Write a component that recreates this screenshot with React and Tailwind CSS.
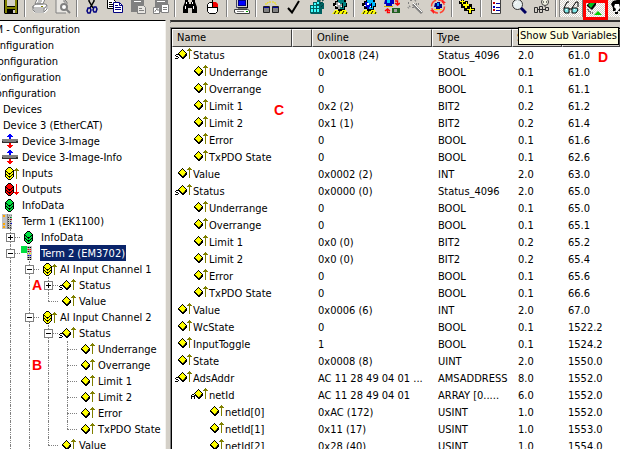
// Palette for the small bitmap icons
const COLORS = {
	k: "#000000",
	y: "#ffff00",
	o: "#808000",
	r: "#ff0000",
	g: "#00e040",
	b: "#0000ff",
	s: "#808080",
	l: "#c0c0c0",
	w: "#ffffff",
	t: "#008080",
	c: "#00ffff",
	n: "#000080",
	a: "#ffa500",
	d: "#303030",
};

// Draws a bitmap icon, one character per pixel
function Bitmap({ rows, swap = {} }) {
	const paths = {};
	rows.forEach((row, y) => {
		[...row].forEach((ch, x) => {
			if (ch === ".") return;
			const key = swap[ch] || ch;
			paths[key] = (paths[key] || "") + `M${x} ${y}h1v1h-1z`;
		});
	});
	return (
		<svg
			width={rows[0].length}
			height={rows.length}
			shapeRendering="crispEdges"
			className="shrink-0"
			aria-hidden="true"
		>
			{Object.entries(paths).map(([key, d]) => (
				<path key={key} d={d} fill={COLORS[key]} />
			))}
		</svg>
	);
}

const VARIABLE = [
	"..............o..",
	".......k.....ooo.",
	"......kyk...ooooo",
	".....kyyyk....o..",
	"....kyyyyyk...o..",
	"...kyyyyyyyk..o..",
	"...kkyyyyykk..o..",
	"....kkyyyokk..o..",
	".....kkyokk...o..",
	"......kkkk....o..",
	".......kk.....o..",
	".................",
];

const STRUCT = [
	"..............o..",
	".......k.....ooo.",
	"......kyk...ooooo",
	".....kyyyk....o..",
	"....kyyyyyk...o..",
	"...kyyyyyyyk..o..",
	".kkkkyyyyykk..o..",
	"k...kkyyyokk..o..",
	".kk..kkyokk...o..",
	"...k..kkkk....o..",
	"kkk....kk.....o..",
	".................",
];

const ARRAY = [
	"..............o..",
	".......k.....ooo.",
	"......kyk...ooooo",
	".....kyyyk....o..",
	"....kyyyyyk...o..",
	"...kyyyyyyyk..o..",
	".kk.kyyyyykk..o..",
	"k..kkkyyyokk..o..",
	"kkkk.kkyokk...o..",
	"k..k..kkkk....o..",
	"k..k...kk.....o..",
	".................",
];

const STACK = [
	"......kkk...",
	".....kyyyk..",
	"....kyyyyyk.",
	"...kyyyyyyyk",
	"...kkyyyyykk",
	"...kykyyykyk",
	"...kyykkkyyk",
	"...kkyykyykk",
	"...kykyyykyk",
	"...kyykkkyyk",
	"....kyykyyk.",
	".....kyyyk..",
	"......kkk...",
];

const UP_ARROW = ["..o..", ".ooo.", "ooooo", "..o..", "..o..", "..o..", "..o..", "..o..", "..o..", "..o..", "..o.."];
const DOWN_ARROW = [...UP_ARROW].reverse();

const IMAGE = [
	".......bb.......",
	"......bbbb......",
	".....bbbbbb.....",
	".......bb.......",
	".......bb.......",
	"ssssssssssssssss",
	"ssssssssssssssss",
	"dsssssssssssssdd",
	"dddddddddddddddd",
	".......rr.......",
	".......rr.......",
	".....rrrrrr.....",
	"......rrrr......",
	".......rr.......",
];

const COUPLER = [
	"lllllsllll",
	"laallslsls",
	"laallsllll",
	"lllllsdldg",
	"lllllsllll",
	"lllllsdldr",
	"lllllsllll",
	"lllllsdldl",
	"lllllsllll",
	"laallsdldb",
	"laallsllll",
	"lllllsdldl",
	"laallsllll",
	"laallsdldl",
	"lllllsssss",
];

const TERMINAL = [
	"gggggglllll",
	"ggggggskgkl",
	"gggggglllll",
	"ggggggsrsrl",
	"gggggglllll",
	"ggggggsksrl",
	"gggggglllll",
	"......sysyl",
	"......lllll",
	"......sbsbl",
	"......lllll",
	"......skskl",
	"......lllll",
	"......skskl",
];

function TreeIcon({ kind }) {
	if (kind === "inputs" || kind === "outputs") {
		const out = kind === "outputs";
		return (
			<span className="flex items-center">
				<Bitmap rows={STACK} swap={out ? { y: "r" } : {}} />
				<Bitmap rows={out ? DOWN_ARROW : UP_ARROW} swap={out ? { o: "r" } : {}} />
			</span>
		);
	}
	if (kind === "info") return <Bitmap rows={STACK} swap={{ y: "g" }} />;
	if (kind === "image") return <Bitmap rows={IMAGE} />;
	if (kind === "coupler") return <Bitmap rows={COUPLER} />;
	if (kind === "terminal") return <Bitmap rows={TERMINAL} />;
	if (kind === "struct") return <Bitmap rows={STRUCT} />;
	if (kind === "array") return <Bitmap rows={ARRAY} />;
	return <Bitmap rows={VARIABLE} />;
}

// guides: | passes by, t branches, L is the last branch, + and - carry an expander
const TREE = [
	{ label: "Device 3-Image", icon: "image", guides: "" },
	{ label: "Device 3-Image-Info", icon: "image", guides: "" },
	{ label: "Inputs", icon: "inputs", guides: "" },
	{ label: "Outputs", icon: "outputs", guides: "" },
	{ label: "InfoData", icon: "info", guides: "" },
	{ label: "Term 1 (EK1100)", icon: "coupler", guides: "" },
	{ label: "InfoData", icon: "info", guides: "+" },
	{ label: "Term 2 (EM3702)", icon: "terminal", guides: "-", selected: true },
	{ label: "AI Input Channel 1", icon: "inputs", guides: "|-" },
	{ label: "Status", icon: "struct", guides: "||+", mark: "A" },
	{ label: "Value", icon: "variable", guides: "||L" },
	{ label: "AI Input Channel 2", icon: "inputs", guides: "|-" },
	{ label: "Status", icon: "struct", guides: "||-" },
	{ label: "Underrange", icon: "variable", guides: "|||t" },
	{ label: "Overrange", icon: "variable", guides: "|||t", mark: "B" },
	{ label: "Limit 1", icon: "variable", guides: "|||t" },
	{ label: "Limit 2", icon: "variable", guides: "|||t" },
	{ label: "Error", icon: "variable", guides: "|||t" },
	{ label: "TxPDO State", icon: "variable", guides: "|||L" },
	{ label: "Value", icon: "variable", guides: "||L" },
];

function Guide({ type, label }) {
	const branch = type !== "|";
	return (
		<span className="relative flex h-4 w-[19px] shrink-0 justify-end">
			<span className="flex w-2.5 flex-col">
				<span className="h-2 border-l border-dotted border-[#808080]" />
				<span
					className={`h-2 border-dotted border-[#808080] ${type === "L" ? "" : "border-l"} ${branch ? "border-t" : ""}`}
				/>
			</span>
			{(type === "+" || type === "-") && (
				<button
					aria-label={`${type === "+" ? "Expand" : "Collapse"} ${label}`}
					className="absolute top-1 left-[5px] flex size-[9px] items-center justify-center border border-[#808080] bg-white"
				>
					<svg width="5" height="5" shapeRendering="crispEdges" aria-hidden="true">
						<path d={type === "+" ? "M0 2h5v1h-5zM2 0h1v5h-1z" : "M0 2h5v1h-5z"} />
					</svg>
				</button>
			)}
		</span>
	);
}

// Red callout letter
function Mark({ children, className }) {
	return (
		<span
			className={`absolute font-['Liberation_Sans',sans-serif] text-sm leading-4 font-bold text-[#ff0000] ${className}`}
		>
			{children}
		</span>
	);
}

function TreeRow({ row }) {
	return (
		<li className="relative flex h-4 items-center pl-px">
			{[...row.guides].map((g, i) => (
				<Guide key={i} type={g} label={row.label} />
			))}
			<span className="flex w-5 shrink-0 items-center pl-px">
				<TreeIcon kind={row.icon} />
			</span>
			<span className={`h-4 px-px pt-px ${row.selected ? "bg-[#0a246a] text-white" : ""}`}>{row.label}</span>
			{row.mark && <Mark className="top-0 left-8">{row.mark}</Mark>}
		</li>
	);
}

function Tree() {
	return (
		<nav
			aria-label="Configuration"
			className="w-[166px] shrink-0 overflow-hidden border-t border-r border-t-black border-r-[#f4f2ee] bg-white"
		>
			<ul className="leading-4">
				<li className="flex h-4 w-20 justify-end pt-px">M - Configuration</li>
				<li className="flex h-4 w-[54px] justify-end pt-px">Configuration</li>
				<li className="flex h-4 w-[58px] justify-end pt-px">Configuration</li>
				<li className="flex h-4 w-[61px] justify-end pt-px">Configuration</li>
				<li className="flex h-4 w-14 justify-end pt-px">Configuration</li>
				<li className="h-4 pt-px pl-[3px]">Devices</li>
				<li className="h-4 pt-px pl-[3px]">Device 3 (EtherCAT)</li>
				{TREE.map((row, i) => (
					<TreeRow key={i} row={row} />
				))}
			</ul>
		</nav>
	);
}

// name, depth, icon, online, type, size, address
const VARIABLES = [
	["Status", 0, "struct", "0x0018 (24)", "Status_4096", "2.0", "61.0"],
	["Underrange", 1, "variable", "0", "BOOL", "0.1", "61.0"],
	["Overrange", 1, "variable", "0", "BOOL", "0.1", "61.1"],
	["Limit 1", 1, "variable", "0x2 (2)", "BIT2", "0.2", "61.2"],
	["Limit 2", 1, "variable", "0x1 (1)", "BIT2", "0.2", "61.4"],
	["Error", 1, "variable", "0", "BOOL", "0.1", "61.6"],
	["TxPDO State", 1, "variable", "0", "BOOL", "0.1", "62.6"],
	["Value", 0, "variable", "0x0002 (2)", "INT", "2.0", "63.0"],
	["Status", 0, "struct", "0x0000 (0)", "Status_4096", "2.0", "65.0"],
	["Underrange", 1, "variable", "0", "BOOL", "0.1", "65.0"],
	["Overrange", 1, "variable", "0", "BOOL", "0.1", "65.1"],
	["Limit 1", 1, "variable", "0x0 (0)", "BIT2", "0.2", "65.2"],
	["Limit 2", 1, "variable", "0x0 (0)", "BIT2", "0.2", "65.4"],
	["Error", 1, "variable", "0", "BOOL", "0.1", "65.6"],
	["TxPDO State", 1, "variable", "0", "BOOL", "0.1", "66.6"],
	["Value", 0, "variable", "0x0006 (6)", "INT", "2.0", "67.0"],
	["WcState", 0, "variable", "0", "BOOL", "0.1", "1522.2"],
	["InputToggle", 0, "variable", "1", "BOOL", "0.1", "1524.2"],
	["State", 0, "variable", "0x0008 (8)", "UINT", "2.0", "1550.0"],
	["AdsAddr", 0, "struct", "AC 11 28 49 04 01 ...", "AMSADDRESS", "8.0", "1552.0"],
	["netId", 1, "array", "AC 11 28 49 04 01", "ARRAY [0.....", "6.0", "1552.0"],
	["netId[0]", 2, "variable", "0xAC (172)", "USINT", "1.0", "1552.0"],
	["netId[1]", 2, "variable", "0x11 (17)", "USINT", "1.0", "1553.0"],
	["netId[2]", 2, "variable", "0x28 (40)", "USINT", "1.0", "1554.0"],
];

const INDENTS = ["pl-[3px]", "pl-[19px]", "pl-[35px]"];

function VariableTable() {
	return (
		<div className="relative mt-1 min-h-0 flex-1 overflow-hidden border-t border-l border-[#808080]">
			<div className="h-full border-t border-l border-black bg-white">
				<table className="w-full table-fixed border-separate border-spacing-0">
					<colgroup>
						<col className="w-[120px]" />
						<col className="w-5" />
						<col className="w-[120px]" />
						<col className="w-20" />
						<col className="w-[50px]" />
						<col />
					</colgroup>
					<thead>
						<tr className="h-[18px] text-left leading-4">
							{["Name", "", "Online", "Type", "S", ""].map((h, i) => (
								<th
									key={i}
									className="border border-t-white border-r-[#404040] border-b-[#404040] border-l-white bg-[#d4d0c8] p-0 pl-1 font-normal"
								>
									{h}
								</th>
							))}
						</tr>
					</thead>
					<tbody>
						{VARIABLES.map(([name, depth, icon, online, type, size, address], i) => (
							<tr key={i} className="h-[17px] leading-4 whitespace-nowrap">
								<td className={`p-0 ${INDENTS[depth]}`}>
									<span className="flex items-start gap-px">
										<TreeIcon kind={icon} />
										{name}
									</span>
								</td>
								<td className="p-0" />
								<td className="p-0 pl-1.5">{online}</td>
								<td className="p-0 pl-1.5">{type}</td>
								<td className="p-0 pl-1.5">{size}</td>
								<td className="p-0 pl-1.5">{address}</td>
							</tr>
						))}
					</tbody>
				</table>
			</div>
			<Mark className="top-[74px] left-[103px]">C</Mark>
			<Mark className="top-[21px] right-3">D</Mark>
		</div>
	);
}

// Gear on a hatched base, shared by several commands
function Gear({ fill, shade }) {
	return (
		<>
			<path d="M0 16l3-4h11l2 4z" fill="#ffff00" />
			<path d="M2 16l2-3M6 16l2-3M10 16l2-3M14 16l1-2" stroke="#000" strokeWidth="1" />
			<path d="M3 3h2V1h3V0h3v2h3v3h1v4h-2v3h-3v1H6v-2H3V8H1V5h2z" fill="#000" />
			<path d="M4 4h2V2h6v2h2v4h-2v3H7V9H4z" fill={fill} />
			<path d="M4 4h3v2h3v3H8v2H6V9H4z" fill={shade} />
			<path d="M6 5h2v2H6zM3 7h2v1H3zM9 8h2v1H9z" fill="#fff" />
			<path d="M10 5h1v5h-1z" fill="#000" />
		</>
	);
}

const ICONS = {
	save: (
		<>
			<path d="M1 1h14v15H2l-1-1z" fill="#000" />
			<path d="M2 2h2v7h8V2h2v13h-2v-4H4v4H2z" fill="#808000" />
			<path d="M4 2h8v6H4zM10 12h2v3h-2z" fill="#d4d0c8" />
		</>
	),
	print: (
		<>
			<path d="M5 1h8l-2 6H3zM1 8l3-2h9l3 1v5l-3 3H3l-2-2z" fill="#fff" />
			<path
				d="M5 1h8l-2 5H3zM6 3h4M5 5h4M1 8l3-2h9l2 1-2 3H1zM1 8v4l2 2h9l3-3V7M2 12h10M12 10v4"
				fill="none"
				stroke="#808080"
			/>
			<path d="M9 8h2v1H9z" fill="#808000" />
		</>
	),
	preview: (
		<>
			<path d="M1 1h8l3 3v11H1z" fill="#e8e6e2" />
			<path d="M1 1h8l3 3v2M1 1v14h10M9 1v3h3" fill="none" stroke="#808080" />
			<circle cx="9" cy="9" r="3" fill="#fff" stroke="#808080" strokeWidth="2" />
			<path d="M11 11l4 4" stroke="#808080" strokeWidth="2" />
		</>
	),
	cut: (
		<>
			<path d="M5 0v3l4 7M10 0v3L6 10" fill="none" stroke="#000" strokeWidth="1.5" />
			<path d="M4 10h2l1 2-1 3H4l-1-2zM10 9h2l1 2-1 3h-2l-1-2z" fill="none" stroke="#000080" strokeWidth="1.5" />
		</>
	),
	copy: (
		<>
			<path d="M.5 1.500h6l2 2v7h-8z" fill="#fff" stroke="#000" />
			<path d="M2 4.500h3M2 6.500h4M2 8.500h4" stroke="#000" />
			<path d="M6.500 4.500h6l3 3v7h-9z" fill="#fff" stroke="#000080" />
			<path d="M8 7.500h3M8 9.500h6M8 11.500h6M12.500 5v2.500h3" stroke="#000080" fill="none" />
		</>
	),
	paste: (
		<>
			<path d="M1 2h4V1h5v1h4v12H1z" fill="#808080" />
			<path d="M4 3h7v1H4z" fill="#fff" />
			<path d="M7.500 7.500h6l2 2v6h-8z" fill="#e8e6e2" stroke="#808080" />
			<path d="M9 10.500h3M9 12.500h5" stroke="#808080" />
		</>
	),
	pasteLink: (
		<>
			<path d="M2 2h4V1h4v1h5v12H2z" fill="#808080" />
			<path d="M4 3h8v1H4z" fill="#fff" />
			<path d="M8.500 6.500h7v8h-7zM.5 9.500h6v6h-6z" fill="#fff" stroke="#808080" />
			<path d="M10 9.500h4M10 11.500h4M2 14v-1l2-2M3 11h2v2" stroke="#808080" fill="none" />
		</>
	),
	find: (
		<>
			<path d="M3 1h3v3h1v2h2V4h1V1h3v3l2 5v6h-5v-5H6v5H1V9l2-5z" fill="#000" />
			<path d="M4 4h1v2H4zM3 8h1v3H3zM10 4h1v2h-1zM11 8h1v3h-1z" fill="#fff" />
		</>
	),
	mouse: (
		<>
			<path d="M7.500 5V1H5" stroke="#000" fill="none" />
			<path d="M4.500 4.500h6l2 2v7l-2 2h-6l-2-2v-7z" fill="#fff" stroke="#000" />
			<path d="M8 4h3l2 2v3H8z" fill="#f00000" />
			<path d="M3 9.500h10M7.500 5v4" stroke="#000" />
		</>
	),
	computer: (
		<>
			<path d="M2.500.5h11v9h-11z" fill="#d4d0c8" stroke="#404060" />
			<path d="M4 2h8v6H4z" fill="#000080" />
			<path d="M5 3h6v4H5z" fill="#0000ff" />
			<path d="M13.500 1v9H4" stroke="#000" fill="none" />
			<path d="M.5 11.500h13l2 1v3h-13l-2-1z" fill="#fff" stroke="#404040" />
			<path d="M3 13h7v1H3z" fill="#808080" />
			<path d="M12 13h2v1h-2z" fill="#00a000" />
		</>
	),
	compare: (
		<>
			<path d="M3 7V5h2V4h6v1h2v2" fill="none" stroke="#f0e000" strokeDasharray="2 1" />
			<path d="M.5 8.500h6v6h-6zM9.500 8.500h6v6h-6z" fill="#808080" stroke="#202020" />
			<path d="M1 9h5v1H1zM10 9h5v1h-5z" fill="#0000a0" />
		</>
	),
	check: <path d="M2 10l4 4.500L13 3" fill="none" stroke="#000" strokeWidth="2" />,
	cubes: (
		<>
			<path d="M1 7h3V4h4V2h3v2h3v1h1v6h-2v5H2l-1-1z" fill="#006060" />
			<path
				d="M2 8h2v2H2zM5 8h2v2H5zM8 8h2v2H8zM2 11h2v3H2zM5 11h2v3H5zM8 11h2v3H8zM5 5h2v2H5zM8 4h2v2H8z"
				fill="#40ffff"
			/>
			<path d="M11 3l4-1M11 6l4-4M12 9l3-3" stroke="#003030" strokeDasharray="1 1" />
		</>
	),
	gearTeal: <Gear fill="#008080" shade="#a0a0a0" />,
	gearBlue: <Gear fill="#00b8ff" shade="#0000d0" />,
	reload: (
		<>
			<path d="M1 2h3V0h4v2h2v4H8v2H2V6H0z" fill="#0000c0" />
			<path d="M3 2h3v3H3z" fill="#00d0ff" />
			<path d="M0 8h9v1H0z" fill="#d0b000" />
			<path d="M11 3h2.500v3M11 5l2.500 2L16 5M6 14.500H3.500V11M1 13l2.500-2L6 13" fill="none" stroke="#ff0000" strokeWidth="1.500" />
			<path d="M8 10h8v5H8z" fill="#206020" />
			<path d="M10 11h3v3h-3z" fill="#a0a0a0" />
		</>
	),
	wand: (
		<>
			<path d="M6 6l9 9" stroke="#808080" strokeWidth="3" />
			<path d="M6 5l9 9" stroke="#fff" />
			<path d="M4 0v4M2 5H0M8 3l2-2M3 8l-2 2M9 6h3M6 9v2" stroke="#808080" strokeDasharray="1 1" strokeWidth="2" />
		</>
	),
	restart: (
		<>
			<circle cx="8" cy="8.500" r="6.500" fill="none" stroke="#ff4030" strokeDasharray="8 2" strokeWidth="1.500" />
			<path d="M5 5h2V4h3v2h2v4h-2v1H6V9H4z" fill="#000080" />
			<path d="M7 5h2v3H7z" fill="#00a0ff" />
			<path d="M4 11h8v1H4z" fill="#ffe000" />
			<path d="M12 1v4h4zM4 16v-4H0z" fill="#ff2020" />
		</>
	),
	add: (
		<>
			<path d="M2 0h3v3h4v3h4v4h3v3h-3v3h-4v-3H5v-3H2V6H0V3h2z" fill="#000" />
			<path d="M3 1h1v2h2v1H4v2H3V4H1V3h2zM7 4h1v2h2v2H8v2H6V8H4V6h3zM11 9h1v2h3v1h-3v3h-2v-3H8v-1h3z" fill="#ffff00" />
		</>
	),
	list: (
		<>
			<path d="M3.500 1.500h9v14h-9z" fill="#fff" stroke="#404040" />
			<path d="M5 4h2v2H5zM5 11h2v2H5z" fill="#c00000" />
			<path d="M5 8h2v2H5z" fill="#0000c0" />
			<path d="M8 5.500h4M8 9.500h4M8 12.500h4" stroke="#0000a0" />
		</>
	),
	zoom: (
		<>
			<circle cx="6.500" cy="6.500" r="5" fill="#e8f0f0" stroke="#303030" />
			<path d="M10 10l5 5" stroke="#000060" strokeWidth="3" />
			<path d="M4 6l2-2" stroke="#fff" />
		</>
	),
	tools: (
		<>
			<circle cx="11" cy="4" r="3.500" fill="#f0f0e0" stroke="#404040" />
			<path d="M9 4h1M12 4h1" stroke="#000" />
			<path d="M.5 9.500h3v5h-3zM11.500 9.500h3v3h-3zM4 11.500h7M5.500 8.500h3v6h-3zM11 8v1" fill="#d4d0c8" stroke="#303030" />
		</>
	),
	glasses: (
		<>
			<path d="M1 9l3-6h2M9 9l4-6h2v5" fill="none" stroke="#000" />
			<path d="M1 9h5v5H2l-1-2zM9 9h5l1 2-2 3H9z" fill="#80e8e8" stroke="#000" />
			<path d="M6 10h3" stroke="#000" />
			<path d="M3 10h1v1H3zM11 10h1v1h-1z" fill="#fff" />
		</>
	),
	subVariables: (
		<>
			<path d="M1 6l5-5 4 3v2l-4 5-5-4z" fill="#000" />
			<path d="M2 6l4-4 3 2-4 5z" fill="#00c020" />
			<path d="M2 10v2h2v2h3v1" fill="none" stroke="#000" strokeDasharray="1 1" />
			<path d="M8 16l4-4 4 4z" fill="#00d000" />
		</>
	),
	user: (
		<>
			<path d="M2 5l2-3 4-1h6v5h-2v6h-3v3H6v-3H4V9z" fill="#000" />
			<path d="M6 5h4l1 4-3 4H6l1-3-2-2z" fill="#fff" />
			<path d="M11 1h4v5h-3z" fill="#0000d0" />
		</>
	),
};

// Toolbar commands, grouped between separators
const GROUPS = [
	[["save", "Save"]],
	[["print", "Print"], ["preview", "Print Preview"]],
	[["cut", "Cut"], ["copy", "Copy"], ["paste", "Paste"], ["pasteLink", "Paste with Links"]],
	[["find", "Find"], ["mouse", "Select"]],
	[["computer", "Choose Target System"]],
	[["compare", "Generate Mappings"], ["check", "Check Configuration"], ["cubes", "Activate Configuration"], ["gearTeal", "Config Mode"]],
	[["gearBlue", "Run Mode"], ["reload", "Reload Devices"], ["wand", "Scan"], ["restart", "Toggle Free Run"]],
	[["add", "Append"]],
	[["list", "Properties"], ["zoom", "Zoom"], ["tools", "Show Tools"]],
	[["glasses", "Show Online Data"], ["subVariables", "Show Sub Variables"], ["user", "Security"]],
];

const PRESSED =
	"border-t border-l border-[#808080] bg-[repeating-conic-gradient(#ffffff_0_25%,#d4d0c8_0_50%)] bg-[length:2px_2px]";

function Toolbar() {
	return (
		<div role="toolbar" className="relative flex h-5 shrink-0 items-end overflow-hidden pb-[3px]">
			<div className="-ml-px flex">
				{GROUPS.map((group, gi) => (
					<div key={gi} className="flex">
						{gi > 0 && (
							<span className="flex w-1.5 justify-center">
								<span className="w-0.5 border-r border-l border-r-white border-l-[#808080]" />
							</span>
						)}
						{group.map(([icon, title]) => (
							<button
								key={icon}
								aria-label={title}
								className={`flex h-[22px] w-[23px] items-center justify-center ${gi === 9 ? PRESSED : ""}`}
							>
								<svg width="16" height="16" viewBox="0 0 16 16" aria-hidden="true">
									{ICONS[icon]}
								</svg>
							</button>
						))}
					</div>
				))}
			</div>
			{/* Highlight around the active command */}
			<span className="absolute top-0 left-[583px] h-5 w-[25px] border-[3px] border-[#ff0000]" />
		</div>
	);
}

export default function App() {
	return (
		<div className="relative flex h-screen flex-col overflow-hidden bg-[#d4d0c8] font-['DejaVu_Sans_Condensed','DejaVu_Sans',sans-serif] text-[11px] whitespace-nowrap text-black">
			<Toolbar />
			<div className="flex min-h-0 flex-1 gap-1">
				<Tree />
				<main className="flex min-w-0 flex-1 flex-col">
					<div className="h-[3px] shrink-0 border-t-2 border-l border-t-[#303030] border-l-[#808080]" />
					<VariableTable />
				</main>
			</div>
			<div
				role="tooltip"
				className="absolute top-[27px] right-px border border-black bg-[#ffffe1] px-px leading-4"
			>
				Show Sub Variables
			</div>
		</div>
	);
}
